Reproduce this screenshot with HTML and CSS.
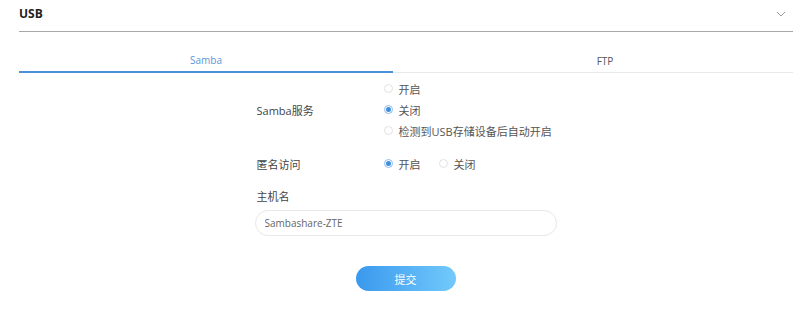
FILE: index.html
```html
<!DOCTYPE html>
<html lang="zh-CN">
<head>
    <meta charset="UTF-8">
    <title>USB</title>
    <link rel="stylesheet" href="styles.css">
</head>
<body>

<div class="panel">
    <div class="panel-head">
        <span class="panel-title">USB</span>
        <svg class="chevron" width="10" height="6" viewBox="0 0 10 6">
            <path d="M1 1 L5 5 L9 1" fill="none" stroke="#9a9a9a" stroke-width="1"/>
        </svg>
    </div>

    <div class="tabs">
        <div class="tab active">Samba</div>
        <div class="tab tab-ftp">FTP</div>
    </div>

    <div class="form">
        <div class="field">
            <div class="field-label">Samba服务</div>
            <div class="options column">
                <label class="radio"><span class="dot"></span>开启</label>
                <label class="radio"><span class="dot checked"></span>关闭</label>
                <label class="radio"><span class="dot"></span>检测到USB存储设备后自动开启</label>
            </div>
        </div>

        <div class="field anon">
            <div class="field-label">匿名访问</div>
            <div class="options">
                <label class="radio"><span class="dot checked"></span>开启</label>
                <label class="radio"><span class="dot"></span>关闭</label>
            </div>
        </div>

        <div class="host-label">主机名</div>
        <input class="host-input" type="text" value="Sambashare-ZTE">

        <div class="actions">
            <button class="btn-submit">提交</button>
        </div>
    </div>
</div>

</body>
</html>
```

FILE: styles.css
```css
* {
    box-sizing: border-box;
    margin: 0;
    padding: 0;
}

body {
    background: #fff;
    font-family: "Open Sans", "Noto Sans CJK SC", sans-serif;
    font-size: 11px;
    color: #555;
}

.panel {
    margin: 0 7px 0 19px;
}

.panel-head {
    height: 32px;
    display: flex;
    align-items: center;
    justify-content: space-between;
    border-bottom: 1px solid #a8a8a8;
    padding-bottom: 4px;
}

.panel-title {
    font-size: 12px;
    font-weight: bold;
    color: #222;
}

.chevron {
    margin-right: 7px;
}

/* Tabs */
.tabs {
    display: flex;
    height: 41px;
    border-bottom: 1px solid #e8e8e8;
}

.tab {
    display: flex;
    align-items: center;
    justify-content: center;
    font-size: 10px;
    color: #555;
    padding-top: 17px;
}

.tab.active {
    width: 374px;
    color: #5b97d8;
    border-bottom: 2px solid #4a90d9;
    margin-bottom: -1px;
}

.tab-ftp {
    flex: 1;
    padding-left: 24px;
}

/* Form */
.form {
    width: 301px;
    margin: 5px auto 0;
    padding-left: 1px;
}

.field {
    display: flex;
    align-items: center;
}

.field-label {
    width: 127px;
    flex-shrink: 0;
    color: #444;
}

.options {
    display: flex;
}

.options.column {
    flex-direction: column;
}

.radio {
    display: flex;
    align-items: center;
    height: 21px;
    color: #555;
    margin-right: 18px;
    white-space: nowrap;
}

.dot {
    width: 9px;
    height: 9px;
    border: 1px solid #e2e2e2;
    border-radius: 50%;
    margin-right: 6px;
    display: inline-flex;
    align-items: center;
    justify-content: center;
}

.dot.checked {
    border-color: #8dbbec;
}

.dot.checked::after {
    content: "";
    width: 5px;
    height: 5px;
    border-radius: 50%;
    background: #3e8ee0;
}

.anon {
    margin-top: 12px;
}

.host-label {
    margin-top: 12px;
    height: 21px;
    line-height: 21px;
    color: #444;
}

.host-input {
    display: block;
    width: 302px;
    height: 26px;
    margin: 3px 0 0 -2px;
    border: 1px solid #e8e8e8;
    border-radius: 13px;
    padding: 0 9px;
    font-family: "Open Sans", "Noto Sans CJK SC", sans-serif;
    font-size: 10px;
    color: #666;
    outline: none;
}

.actions {
    display: flex;
    justify-content: center;
    margin-top: 30px;
    margin-left: -2px;
}

.btn-submit {
    width: 100px;
    height: 25px;
    border: none;
    border-radius: 13px;
    background: linear-gradient(to right, #3a99ee, #72c9fb);
    color: #fff;
    font-family: "Open Sans", "Noto Sans CJK SC", sans-serif;
    font-size: 11px;
    cursor: pointer;
}
```
